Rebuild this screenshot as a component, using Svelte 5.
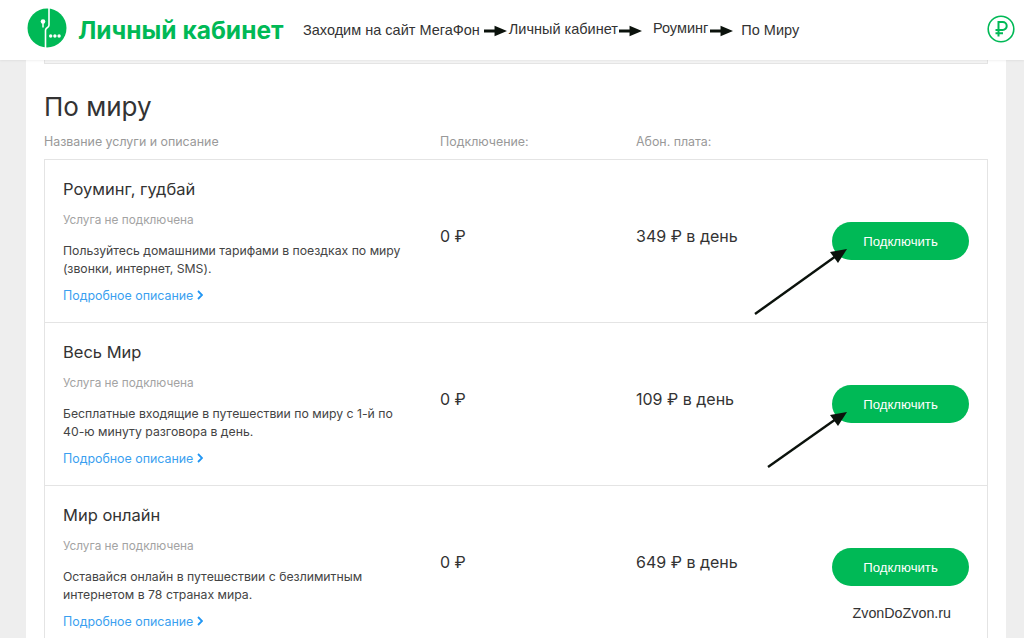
<script>
  const rows = [
    { title: 'Роуминг, гудбай', desc: ['Пользуйтесь домашними тарифами в поездках по миру', '(звонки, интернет, SMS).'], fee: '349 ₽ в день' },
    { title: 'Весь Мир', desc: ['Бесплатные входящие в путешествии по миру с 1-й по', '40-ю минуту разговора в день.'], fee: '109 ₽ в день' },
    { title: 'Мир онлайн', desc: ['Оставайся онлайн в путешествии с безлимитным', 'интернетом в 78 странах мира.'], fee: '649 ₽ в день' }
  ];
  const steps = [
    { label: 'Заходим на сайт МегаФон', cls: 's0' },
    { label: 'Личный кабинет', cls: 's1' },
    { label: 'Роуминг', cls: 's2' },
    { label: 'По Миру', cls: 's3' }
  ];
</script>

<div class="page">
  <header class="header">
    <svg class="logo" viewBox="0 0 40 40" width="40" height="40" aria-hidden="true">
      <circle cx="20" cy="20" r="19.5" fill="#00b956" />
      <path d="M22 0v17c0 1-.4 1.6-1.100 2.200l-1.500 1.200c-.6.6-.9 1.200-.9 2V40" fill="none" stroke="#fff" stroke-width="1.6" />
      <circle cx="16" cy="13.5" r="2.3" fill="#fff" />
      <path d="M16 15v4.500" stroke="#fff" stroke-width="1.5" />
      <circle cx="23.7" cy="28" r="1.7" fill="#fff" />
      <circle cx="27.9" cy="28" r="1.7" fill="#fff" />
      <circle cx="32.1" cy="28" r="1.7" fill="#fff" />
    </svg>
    <span class="brand">Личный кабинет</span>
    <nav class="steps">
      {#each steps as s, i}
        <span class="step {s.cls}">{s.label}</span>
        {#if i < steps.length - 1}
          <svg class="flow flow{i}" viewBox="0 0 24 12" width="23" height="12" aria-hidden="true">
            <path d="M0 4.500h11V.5l13 5.500-13 5.500v-4H0z" fill="#0b120c" />
          </svg>
        {/if}
      {/each}
    </nav>
    <svg class="rub-icon" viewBox="0 0 28 28" width="28" height="28" aria-hidden="true">
      <circle cx="14" cy="14" r="12.8" fill="none" stroke="#00b956" stroke-width="1.6" />
      <path d="M11.5 21.5V7h4.200a3.900 3.900 0 0 1 0 8H8.500M8.500 18.200H16" fill="none" stroke="#00b956" stroke-width="2" />
    </svg>
  </header>

  <main class="panel">
    <div class="prev"></div>
    <h1>По миру</h1>
    <div class="cols">
      <span>Название услуги и описание</span>
      <span>Подключение:</span>
      <span>Абон. плата:</span>
    </div>
    <div class="table">
      {#each rows as r, i}
        <section class="row">
          <div class="info">
            <h2>{r.title}</h2>
            <p class="status">Услуга не подключена</p>
            <p class="desc">{r.desc[0]}<br />{r.desc[1]}</p>
            <a class="more" href="#more">Подробное описание
              <svg viewBox="0 0 6 10" width="6" height="10" aria-hidden="true"><path d="M1 1l4 4-4 4" fill="none" stroke="#2196f3" stroke-width="1.8" /></svg>
            </a>
          </div>
          <div class="price">0 ₽</div>
          <div class="price">{r.fee}</div>
          <div class="action">
            <button type="button">Подключить</button>
          </div>
          {#if i === 2}
            <span class="mark">ZvonDoZvon.ru</span>
          {/if}
        </section>
      {/each}
    </div>
  </main>

  <svg class="pointer" viewBox="0 0 1024 638" width="1024" height="638" aria-hidden="true">
    <path d="M755 314 L836 256" stroke="#0b120c" stroke-width="2.4" fill="none" />
    <path d="M847 249 L830 252 L838 263 Z" fill="#0b120c" />
    <path d="M768 467 L836 419" stroke="#0b120c" stroke-width="2.4" fill="none" />
    <path d="M847 412 L830 415 L838 426 Z" fill="#0b120c" />
  </svg>
</div>

<style>
  :global(body) {
    margin: 0;
    background: #eeeeee;
  }
  .page {
    position: relative;
    width: 1024px;
    height: 638px;
    overflow: hidden;
    font-family: Inter, "Liberation Sans", sans-serif;
    color: #333;
  }
  .header {
    height: 60px;
    background: #fff;
    display: flex;
    align-items: center;
    padding: 0 9px 0 27px;
    box-shadow: 0 1px 2px rgba(0, 0, 0, 0.06);
    position: relative;
    z-index: 1;
  }
  .logo {
    flex: none;
    margin-top: -4px;
  }
  .brand {
    margin-left: 11px;
    width: 205px;
    font-size: 24.5px;
    font-weight: 700;
    color: #00b956;
    font-family: Inter, sans-serif;
    white-space: nowrap;
  }
  .steps {
    display: flex;
    align-items: center;
    margin-left: 20px;
    font-family: "Liberation Sans", sans-serif;
    font-size: 14.5px;
    color: #333;
    flex: 1;
  }
  .step {
    white-space: nowrap;
  }
  .s1 { margin: -3px 0 0 2px; }
  .s2 { margin: -5px 0 0 11px; }
  .s3 { margin: -1px 0 0 8px; }
  .flow {
    flex: none;
    margin-top: 2px;
    margin-left: 4px;
  }
  .flow1 { margin-left: 1px; }
  .flow2 { margin-left: 2px; }
  .rub-icon {
    flex: none;
    margin-top: -2px;
  }
  .panel {
    margin: 0 18px 0 26px;
    background: #fff;
    padding: 0 18px;
    height: 578px;
  }
  .prev {
    height: 3px;
    border: 1px solid #e4e4e4;
    border-top: 0;
    background: #f4f4f4;
  }
  h1 {
    margin: 27px 0 0;
    font-size: 26px;
    line-height: 32px;
    font-weight: 400;
    color: #333;
    font-family: Inter, sans-serif;
  }
  .cols {
    display: grid;
    grid-template-columns: 396px 196px 1fr;
    margin-top: 9px;
    font-size: 12.4px;
    line-height: 20px;
    color: #999;
  }
  .table {
    margin-top: 7px;
    border: 1px solid #e4e4e4;
    border-bottom: 0;
  }
  .row {
    position: relative;
    display: grid;
    grid-template-columns: 377px 196px 196px 137px;
    height: 162px;
    padding-left: 18px;
    border-bottom: 1px solid #e4e4e4;
  }
  h2 {
    margin: 19px 0 0;
    font-size: 16.5px;
    line-height: 20px;
    font-weight: 400;
    color: #333;
  }
  .status {
    margin: 12px 0 0;
    font-size: 11.8px;
    line-height: 18px;
    color: #a3a3a3;
  }
  .desc {
    margin: 13px 0 0;
    font-size: 12.25px;
    line-height: 18px;
    color: #444;
  }
  .more {
    display: inline-block;
    margin-top: 8px;
    font-size: 12.4px;
    line-height: 20px;
    color: #3a9ff0;
    text-decoration: none;
  }
  .price {
    margin-top: 66px;
    font-size: 16px;
    line-height: 20px;
    color: #333;
  }
  .action {
    margin-top: 62px;
  }
  button {
    width: 137px;
    height: 38px;
    border: 0;
    border-radius: 19px;
    background: #00b956;
    color: #fff;
    font-family: "Liberation Sans", sans-serif;
    font-size: 13.2px;
    padding: 0;
  }
  .mark {
    position: absolute;
    left: 807.5px;
    top: 119px;
    font-family: "Liberation Sans", sans-serif;
    font-size: 14.3px;
    color: #333;
  }
  .pointer {
    position: absolute;
    left: 0;
    top: 0;
    pointer-events: none;
    z-index: 2;
  }
</style>
